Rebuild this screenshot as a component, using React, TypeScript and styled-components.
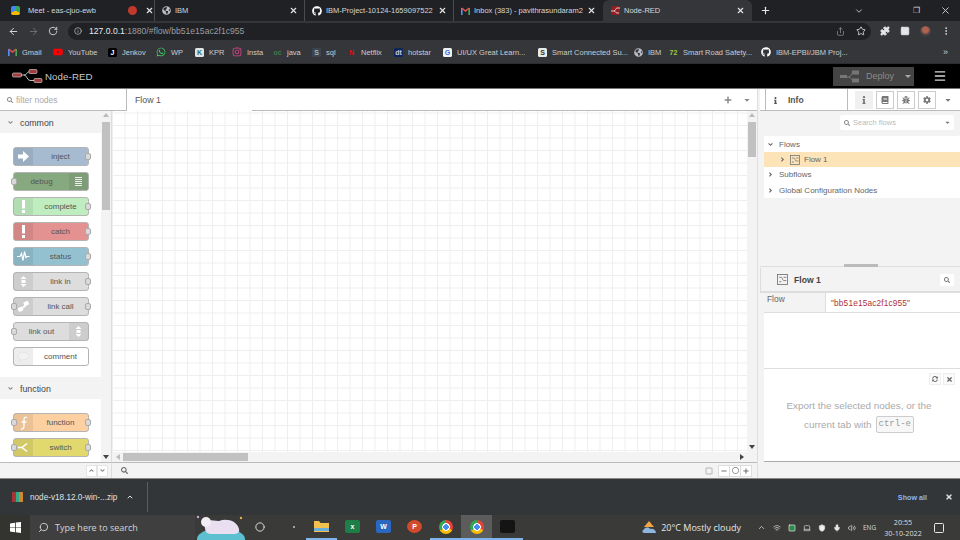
import React from "react";
import styled, { createGlobalStyle } from "styled-components";
import {
  ArrowLeft, ArrowRight, RotateCw, Info, Share, Star, Puzzle, MoreVertical, Plus, X, Search,
  ChevronDown, ChevronUp, Menu, Circle, Square, Wifi, Laptop, Shield, Mic, Volume2,
} from "lucide-react";
import {
  FaGithub, FaWhatsapp, FaInstagram, FaGlobeAmericas, FaYoutube, FaInfo, FaBook, FaBug, FaCog, FaSearch,
  FaCaretDown, FaPlus, FaMinus, FaTimes, FaSyncAlt, FaAngleDown, FaAngleRight, FaAngleUp, FaRegCircle,
} from "react-icons/fa";

const Global = createGlobalStyle`
  html, body { margin: 0; padding: 0; background: #202124; }
  body { width: 960px; height: 540px; overflow: hidden; font-family: "Liberation Sans", Arial, sans-serif; }
  * { box-sizing: border-box; }
`;

const Page = styled.div`
  width: 960px; height: 540px; display: flex; flex-direction: column; overflow: hidden;
`;

/* Browser chrome */
const TabStrip = styled.div`
  height: 21px; background: #202124; display: flex; align-items: stretch; color: #e4e6e9; flex: none;
`;
const Tab = styled.div<{ $w: number; $active?: boolean; $pad?: number; $sep?: boolean; $gap?: number }>`
  width: ${(p) => p.$w}px; flex: none; display: flex; align-items: center; padding: 0 6px 0 ${(p) => p.$pad ?? 8}px; gap: ${(p) => p.$gap ?? 4}px;
  font-size: 7.5px; background: ${(p) => (p.$active ? "#35363a" : "transparent")};
  border-radius: ${(p) => (p.$active ? "6px 6px 0 0" : "0")};
  border-right: 1px solid ${(p) => (p.$sep ? "#4a4b4e" : "transparent")};
  white-space: nowrap; overflow: hidden;
`;
const TabTitle = styled.span`
  flex: 1; overflow: hidden; color: #d5d7da;
`;
const TabClose = styled(X).attrs({ size: 9, strokeWidth: 3 })`
  flex: none; color: #e6e6e6;
`;
const Favicon = styled.span<{ $bg: string; $round?: boolean }>`
  width: 9px; height: 9px; border-radius: ${(p) => (p.$round ? "50%" : "2px")}; background: ${(p) => p.$bg}; flex: none; display: inline-flex; align-items: center; justify-content: center;
`;
const StripSpacer = styled.div`
  flex: 1;
`;
const NewTab = styled.div`
  width: 26px; display: flex; align-items: center; justify-content: center; color: #e8e8e8;
`;
const WinBtn = styled.div<{ $w: number; $mr?: number }>`
  width: ${(p) => p.$w}px; margin-right: ${(p) => p.$mr ?? 0}px; display: flex; align-items: center; justify-content: center; color: #d5d5d5; font-size: 8px;
`;
const Toolbar = styled.div`
  height: 20px; background: #35363a; display: flex; align-items: center; flex: none; color: #dfe1e5; padding-left: 3px;
`;
const NavBtn = styled.div<{ $dim?: boolean }>`
  width: 20px; display: flex; justify-content: center; color: ${(p) => (p.$dim ? "#6f7276" : "#dfe1e5")};
`;
const UrlPill = styled.div`
  width: 803px; margin-left: 5px; height: 17px; background: #202124; border-radius: 9px; display: flex; align-items: center;
  padding: 0 5px 0 6px; font-size: 8.6px; gap: 7px; flex: none;
`;
const UrlHost = styled.span`
  color: #e8eaed;
`;
const UrlPath = styled.span`
  color: #9a9da1; flex: 1;
`;
const PillIcons = styled.div`
  display: flex; align-items: center; gap: 11px; color: #dfe1e5;
`;
const ToolIcons = styled.div`
  display: flex; align-items: center; gap: 10px; margin-left: 9px; color: #e4e6e9;
`;
const Avatar = styled.span`
  width: 11px; height: 11px; border-radius: 50%; background: radial-gradient(circle at 50% 35%, #b0624e 0 30%, #3b3d42 60%); display: block;
`;
const BookmarkBar = styled.div`
  height: 23px; background: #35363a; display: flex; align-items: center; flex: none; padding-left: 8px; color: #c9ccd0; font-size: 7.5px; border-bottom: 1px solid #2b2c30;
`;
const Bookmark = styled.div<{ $w: number }>`
  width: ${(p) => p.$w}px; display: flex; align-items: center; gap: 5px; flex: none; white-space: nowrap; overflow: hidden;
`;
const Glyph = styled.span<{ $bg: string; $fg?: string }>`
  width: 9px; height: 9px; border-radius: 1.5px; background: ${(p) => p.$bg}; color: ${(p) => p.$fg ?? "#fff"}; font-size: 7px; font-weight: 700;
  display: inline-flex; align-items: center; justify-content: center; flex: none; line-height: 1;
`;
const MoreMarks = styled.span`
  margin-left: auto; margin-right: 12px; color: #c9ccd0; font-size: 9px;
`;

/* Node-RED header */
const NrHeader = styled.div`
  height: 25px; background: #000; display: flex; align-items: center; flex: none; border-bottom: 1px solid #777; padding-left: 12px;
`;
const NrTitle = styled.span`
  color: #c8c8c8; font-size: 9.7px; margin-left: 2px; letter-spacing: .1px;
`;
const DeployBtn = styled.div`
  margin-left: auto; width: 81px; height: 19px; background: #444; color: #8a8a8a; font-size: 9px; display: flex; align-items: center; gap: 7px; padding-left: 7px;
`;
const DeployCaret = styled.span`
  width: 0; height: 0; border: 3px solid transparent; border-top: 3.5px solid #aaa; border-bottom: 0; margin-left: 4px;
`;
const Burger = styled.div`
  width: 41px; display: flex; justify-content: center; color: #d8d8d8; margin-left: 5px;
`;

/* Node-RED body */
const Body = styled.div`
  height: 390px; flex: none; display: flex; background: #f3f3f3; color: #555; border-bottom: 1px solid #888;
`;
const Palette = styled.div`
  width: 112px; flex: none; display: flex; flex-direction: column; position: relative;
`;
const FilterBox = styled.div`
  width: 127px; height: 22px; background: #fff; border-right: 1px solid #bbb; border-bottom: 1px solid #bbb; position: relative; z-index: 2;
  display: flex; align-items: center; gap: 3px; padding-left: 7px; font-size: 8.5px; color: #aaa; flex: none;
`;
const PaletteMain = styled.div`
  flex: 1; display: flex; min-height: 0; border-right: 1px solid #ddd;
`;
const PaletteList = styled.div`
  width: 101px; flex: none; overflow: hidden; display: flex; flex-direction: column;
`;
const CatHead = styled.div`
  height: 22px; flex: none; display: flex; align-items: center; gap: 6px; padding: 1px 0 0 7px; color: #444; font-size: 8.8px; background: #f3f3f3;
`;
const CatBody = styled.div<{ $h: number }>`
  height: ${(p) => p.$h}px; flex: none; background: #fff; padding: 14px 0 0 13px; display: flex; flex-direction: column; gap: 6px;
`;
const PNode = styled.div<{ $bg: string; $right?: boolean }>`
  width: 76px; height: 19px; flex: none; background: ${(p) => p.$bg}; border: 1px solid #b4b4b4; border-radius: 3px; position: relative;
  display: flex; flex-direction: ${(p) => (p.$right ? "row-reverse" : "row")}; align-items: stretch; font-size: 8px; color: #555;
`;
const NodeIcon = styled.span`
  width: 19px; flex: none; background: rgba(0, 0, 0, .07); display: flex; align-items: center; justify-content: center; color: #fff;
`;
const NodeLabel = styled.span`
  flex: 1; text-align: center; line-height: 17px; white-space: nowrap;
`;
const Port = styled.span<{ $side: "l" | "r" }>`
  position: absolute; top: 5px; ${(p) => (p.$side === "l" ? "left: -3px" : "right: -3px")}; width: 6px; height: 7px; background: #d9d9d9; border: 1px solid #aaa; border-radius: 2px;
`;
const VTrack = styled.div`
  width: 10px; flex: none; position: relative; background: #f3f3f3;
`;
const ScrollArrowUp = styled.span`
  position: absolute; top: 2px; left: 2px; width: 0; height: 0; border: 3px solid transparent; border-bottom: 4px solid #bbb; border-top: 0;
`;
const ScrollArrowDown = styled.span`
  position: absolute; bottom: 3px; left: 2px; width: 0; height: 0; border: 3px solid transparent; border-top: 4px solid #444; border-bottom: 0;
`;
const VThumb = styled.span<{ $t: number; $h: number }>`
  position: absolute; top: ${(p) => p.$t}px; left: 1px; width: 8px; height: ${(p) => p.$h}px; background: #c1c1c1;
`;
const PalFoot = styled.div`
  height: 16px; flex: none; background: #f3f3f3; border-top: 1px solid #bbb; border-right: 1px solid #ddd; display: flex; align-items: center; padding-left: 86px; color: #888;
`;
const PalBtn = styled.span`
  width: 11px; height: 12px; background: #fff; border: 1px solid #e4e4e4; display: flex; align-items: center; justify-content: center;
`;

const Workspace = styled.div`
  flex: 1; display: flex; flex-direction: column; min-width: 0;
`;
const WsTabs = styled.div`
  height: 22px; flex: none; background: #fff; border-bottom: 1px solid #bbb; display: flex; align-items: center; color: #777; position: relative;
`;
const FlowTab = styled.div`
  position: absolute; left: 15px; top: 0; width: 125px; height: 22px; background: #fff; padding-left: 8px; line-height: 23px; font-size: 8.8px; color: #555; z-index: 3;
`;
const WsTools = styled.div`
  margin-left: auto; display: flex; align-items: center; gap: 11px; padding-right: 6px; color: #888;
`;
const CanvasRow = styled.div`
  flex: 1; display: flex; min-height: 0;
`;
const Canvas = styled.div`
  flex: 1; background-color: #fff;
  background-image: linear-gradient(#eee 1px, transparent 1px), linear-gradient(90deg, #eee 1px, transparent 1px);
  background-size: 12.5px 12.5px; background-position: 0 1.5px;
`;
const HBar = styled.div`
  height: 10px; flex: none; background: #f3f3f3; position: relative;
`;
const HThumb = styled.span`
  position: absolute; left: 11px; top: 1px; width: 125px; height: 8px; background: #c1c1c1;
`;
const HLeft = styled.span`
  position: absolute; left: 4px; top: 2px; width: 0; height: 0; border: 3px solid transparent; border-right: 4px solid #bbb; border-left: 0;
`;
const HRight = styled.span`
  position: absolute; right: 13px; top: 2px; width: 0; height: 0; border: 3px solid transparent; border-left: 4px solid #444; border-right: 0;
`;
const WsFoot = styled.div`
  height: 16px; flex: none; background: #f3f3f3; border-top: 1px solid #bbb; display: flex; align-items: center; color: #888; padding-left: 9px;
`;
const FootSearch = styled.span`
  display: flex; color: #666;
`;
const ZoomGroup = styled.div`
  margin-left: auto; display: flex; align-items: center; margin-right: 5px;
`;
const ZoomBtn = styled.span`
  width: 12px; height: 12px; background: #fff; border: 1px solid #ddd; margin-left: -1px; display: flex; align-items: center; justify-content: center; color: #777;
`;
const FitBtn = styled.span`
  width: 11px; height: 12px; margin-right: 5px; display: flex; align-items: center; justify-content: center; color: #999;
`;

const Divider = styled.div`
  width: 3px; flex: none; background: #f3f3f3; border-left: 1px solid #ddd;
`;
const Sidebar = styled.div`
  width: 200px; flex: none; display: flex; flex-direction: column; background: #f3f3f3;
`;
const SideTabs = styled.div`
  height: 22px; flex: none; background: #fff; border-bottom: 1px solid #bbb; display: flex; align-items: center; gap: 3px; padding-right: 8px; color: #777;
`;
const InfoTab = styled.div`
  width: 83px; height: 22px; margin-left: 5px; border-left: 1px solid #bbb; border-right: 1px solid #bbb; display: flex; align-items: center; gap: 9px; padding: 1px 0 0 6px; font-size: 8.5px; font-weight: 700; color: #555; margin-right: 4px;
`;
const SideBtn = styled.span<{ $on?: boolean }>`
  width: 18px; height: 18px; display: flex; align-items: center; justify-content: center; border: 1px solid ${(p) => (p.$on ? "#f0f0f0" : "#ccc")};
  background: ${(p) => (p.$on ? "#f0f0f0" : "#fff")}; color: #777;
`;
const SideCaret = styled.span`
  margin-left: auto; display: flex; color: #777;
`;
const SearchRow = styled.div`
  height: 24px; flex: none; padding: 4px 6px 0 80px;
`;
const SearchFlows = styled.div`
  height: 15px; background: #fff; border-radius: 2px; display: flex; align-items: center; gap: 3px; padding: 0 3px 0 4px; font-size: 7.5px; color: #bbb;
`;
const Tree = styled.div`
  margin-left: 4px; height: 62px; background: #fff; flex: none; padding-top: 1px; margin-top: 1px;
`;
const TreeRow = styled.div<{ $sel?: boolean; $indent?: number }>`
  height: 15.2px; display: flex; align-items: center; gap: ${(p) => (p.$sel ? 4 : 5)}px; padding-left: ${(p) => p.$indent ?? 3}px; font-size: 8px; color: #666;
  background: ${(p) => (p.$sel ? "#fde3b8" : "transparent")};
`;
const TreeGap = styled.div`
  height: 69px; flex: none; border-bottom: 1px solid #ddd; position: relative;
`;
const SashHandle = styled.span`
  position: absolute; left: 84px; bottom: -1px; width: 34px; height: 3px; background: #bbb;
`;
const DetailHead = styled.div`
  height: 25px; margin-top: 1px; flex: none; display: flex; align-items: center; gap: 6px; padding-left: 16px; font-size: 8.6px; font-weight: 700; color: #444; border-bottom: 2px solid #ddd; border-left: 1px solid #ddd;
`;
const DetailSearch = styled.span`
  margin-left: auto; margin-right: 6px; width: 14px; height: 12px; background: #fff; display: flex; align-items: center; justify-content: center; color: #777;
`;
const PropRow = styled.div`
  height: 20px; flex: none; display: flex; background: #fff; border-bottom: 1px solid #ddd; margin-left: 4px; font-size: 8px;
`;
const PropKey = styled.div`
  width: 62px; background: #f3f3f3; padding: 1px 0 0 3px; color: #666; border-right: 1px solid #ddd; font-size: 8.4px;
`;
const PropVal = styled.div`
  padding: 5px 0 0 5px; color: #a33; letter-spacing: .15px; font-size: 8.3px;
`;
const PropEmpty = styled.div`
  height: 56px; flex: none; margin-left: 4px; background: #fff; border-bottom: 1px solid #ddd;
`;
const Help = styled.div`
  height: 93px; flex: none; margin-left: 4px; background: #fff; border-bottom: 1px solid #aaa; position: relative; padding: 27px 28px 0 22px; color: #aaa; font-size: 9.9px;
`;
const HelpLine = styled.div`
  height: 19px; display: flex; align-items: center; justify-content: center; gap: 4px; white-space: nowrap;
`;
const HelpTools = styled.div`
  position: absolute; top: 4px; right: 5px; display: flex; gap: 2px; color: #666;
`;
const HelpBtn = styled.span`
  width: 12px; height: 12px; border: 1px solid #eee; display: flex; align-items: center; justify-content: center; background: #fafafa;
`;
const Kbd = styled.code`
  line-height: 13px; font-family: "Liberation Mono", monospace; font-size: 9px; background: #f7f7f7; border: 1px solid #ccc; border-radius: 2px; padding: 1px 2px; color: #999;
`;

/* Downloads + Taskbar */
const DownloadBar = styled.div`
  height: 36px; flex: none; background: #333639; display: flex; align-items: center; color: #dfe1e5; font-size: 8.2px;
`;
const DlItem = styled.div`
  width: 148px; height: 30px; display: flex; align-items: center; gap: 7px; padding-left: 12px; border-right: 1px solid #5a5c60;
`;
const DlIcon = styled.span`
  width: 11px; height: 10px; flex: none; background: linear-gradient(90deg, #a33 0 33%, #3a8 33% 66%, #c83 66%); display: block;
`;
const DlName = styled.span`
  width: 89px; white-space: nowrap; overflow: hidden;
`;
const ShowAll = styled.span`
  margin-left: auto; margin-right: 5px; color: #8ab4f8; font-size: 7.2px; font-weight: 700;
`;
const DlClose = styled.span`
  width: 28px; display: flex; justify-content: center; color: #e0e0e0; padding-left: 5px;
`;
const Taskbar = styled.div`
  flex: 1; background: #3a3a38; display: flex; align-items: center; color: #e6e6e6; min-height: 0;
`;
const StartBtn = styled.div`
  width: 30px; height: 100%; display: flex; align-items: center; justify-content: center; background: #333330;
`;
const SearchBox = styled.div`
  width: 165px; height: 100%; background: #3f3f3f; display: flex; align-items: center; gap: 6px; padding-left: 8px; font-size: 9px; color: #d4d4d4; font-family: "Open Sans", sans-serif;
`;
const MirroredSearch = styled(Search)`
  transform: scaleX(-1);
`;
const Widget = styled.div`
  width: 50px; height: 100%; flex: none; display: flex;
`;
const TaskIcon = styled.div<{ $active?: boolean; $run?: boolean; $w?: number; $pl?: number }>`
  width: ${(p) => p.$w ?? 31}px; height: 100%; flex: none; display: flex; align-items: center; justify-content: center;
  padding-left: ${(p) => p.$pl ?? 0}px;
  background: ${(p) => (p.$active ? "#5c5c5c" : "transparent")};
  border-bottom: 2px solid ${(p) => (p.$run ? "#7fb4e8" : "transparent")};
`;
const AppBox = styled.span<{ $bg: string; $round?: boolean }>`
  width: 15px; height: 13px; background: ${(p) => p.$bg}; border-radius: ${(p) => (p.$round ? "50%" : "2px")}; color: #fff; font-size: 7px; font-weight: 700;
  display: flex; align-items: center; justify-content: center;
`;
const ChromeBall = styled.span`
  width: 14px; height: 14px; border-radius: 50%; display: block;
  background: radial-gradient(circle, #4a8df0 0 28%, #fff 29% 38%, transparent 39%), conic-gradient(#e84335 0 33%, #fbbc05 33% 66%, #34a853 66%);
`;
const Tray = styled.div`
  margin-left: auto; display: flex; align-items: center; height: 100%; font-family: "Open Sans", sans-serif;
`;
const Weather = styled.div`
  display: flex; align-items: center; gap: 4px; font-size: 9px; margin-right: 16px; color: #e6e6e6;
`;
const TrayIcons = styled.div`
  display: flex; align-items: center; gap: 7px; color: #ddd; margin-right: 7px;
`;
const TrayLang = styled.span`
  font-size: 6.5px; width: 13px;
`;
const Clock = styled.div`
  font-size: 7.2px; text-align: center; line-height: 11px; width: 40px; color: #ddd; white-space: nowrap;
`;
const Notify = styled.div`
  width: 32px; margin-right: 5px; display: flex; justify-content: center; color: #e6e6e6;
`;

const Logo = () => (
  <svg width="31" height="14" viewBox="0 0 31 14">
    <path d="M8 6h4c3 0 3-3.500 6-3.500h2M12 6c3 0 3 5.500 6 5.500h4" stroke="#bbb" strokeWidth="1" fill="none" />
    <rect x="0.500" y="4" width="9" height="4" rx="1" fill="#a33c3c" stroke="#ddd" strokeWidth=".6" />
    <rect x="17" y="0.500" width="8" height="4" rx="1" fill="#a33c3c" stroke="#ddd" strokeWidth=".6" />
    <rect x="22" y="9.500" width="8" height="4" rx="1" fill="#a33c3c" stroke="#ddd" strokeWidth=".6" />
  </svg>
);
const SmallLogo = () => (
  <svg width="9" height="9" viewBox="0 0 9 9" stroke="#f3d0d0" strokeWidth=".9" fill="none">
    <path d="M0 5h3c1.500 0 1.500-3 3-3h3M3 5c1.500 0 1.500 2 3 2h2" />
  </svg>
);
const GmailIcon = () => (
  <svg width="9" height="8" viewBox="0 0 9 8" fill="none" strokeWidth="1.600">
    <path d="M.8 8V1" stroke="#5b8def" />
    <path d="M8.200 8V1" stroke="#45a85a" />
    <path d="M.8 1l3.700 3L8.200 1" stroke="#e0534a" />
  </svg>
);
const DeployIcon = () => (
  <svg width="19" height="13" viewBox="0 0 19 13">
    <path d="M6 7h3c2 0 2-4 4-4M9 7c2 0 2 3 4 3" stroke="#777" fill="none" />
    <rect x="0" y="5" width="7" height="3" fill="#777" />
    <rect x="12" y="0.500" width="7" height="4" fill="#777" />
    <rect x="12" y="8.500" width="7" height="4" fill="#777" />
  </svg>
);
const FlowIcon = ({ size = 10 }: { size?: number }) => (
  <svg width={size} height={size} viewBox="0 0 10 10" fill="none" stroke="#777" strokeWidth=".8">
    <rect x=".5" y=".5" width="9" height="9" />
    <path d="M2 3h2M6 3h2.500M2 7h2M6 6h2.500M4 3c1 0 1 3 2 3" />
  </svg>
);
const Bear = () => (
  <svg width="50" height="25" viewBox="0 0 50 25">
    <ellipse cx="26" cy="24" rx="24" ry="11" fill="#5cc0d0" />
    <path d="M8 6c6-2 10 0 16 0 8-3 18 0 20 8 1 4-2 5-6 5H16c-4 0-6-3-6-6z" fill="#e9dff0" />
    <circle cx="11" cy="7" r="5" fill="#f2ecf5" />
    <circle cx="3" cy="2" r="1.200" fill="#c9a5e0" />
    <circle cx="46" cy="3" r="1.200" fill="#e5b04a" />
  </svg>
);
const InjectArrow = () => (
  <svg width="11" height="11" viewBox="0 0 11 11" fill="#fff">
    <path d="M0 3.500h5V0l6 5.500L5 11V7.500H0z" />
  </svg>
);
const WrenchLines = () => (
  <svg width="9" height="11" viewBox="0 0 9 11" stroke="#eee" strokeWidth="1">
    <path d="M1 1.500h7M1 3.500h7M1 5.500h7M1 7.500h7M1 9.500h7" />
  </svg>
);
const Pulse = () => (
  <svg width="13" height="11" viewBox="0 0 13 11" stroke="#fff" strokeWidth="1.200" fill="none">
    <path d="M0 5.500h3l1.500-3 1.500 7 1.500-9 1.500 6 1-1h2.500" />
  </svg>
);
const LinkArrows = () => (
  <svg width="7" height="11" viewBox="0 0 7 11" fill="#fff">
    <path d="M3.500 0l3 3h-6zM3.500 11l3-3h-6zM1.500 4h4v3h-4z" />
  </svg>
);
const LinkCallIcon = () => (
  <svg width="13" height="12" viewBox="0 0 13 12" fill="#fff">
    <rect x="6.500" y="0.500" width="5" height="4" rx="1" transform="rotate(-25 9 2)" />
    <rect x="1" y="6.500" width="5" height="4" rx="1" transform="rotate(-25 3 8)" />
    <path d="M5 6l3-2 1 1.500-3 2z" />
  </svg>
);
const Bubble = () => (
  <svg width="13" height="10" viewBox="0 0 13 10" fill="#f2f2f2" stroke="#ddd" strokeWidth=".6">
    <path d="M1 4c0-2 2.500-3.500 5.500-3.500S12 2 12 4s-2.500 3.500-5.500 3.500L3 9l.6-2.200C2 6 1 5 1 4z" />
  </svg>
);
const SwitchIcon = () => (
  <svg width="12" height="11" viewBox="0 0 12 11" stroke="#fff" strokeWidth="1.600" fill="none">
    <path d="M0 5.500h4M4 5.500L9 1.500M4 5.500L9 9.500" />
  </svg>
);
const FnIcon = () => (
  <svg width="8" height="14" viewBox="0 0 8 14" stroke="#fff" strokeWidth="1.300" fill="none">
    <path d="M7 1.500C4.500 0.500 4 2 4 4v6c0 2-1 3.500-3 3M1.500 6h5" />
  </svg>
);
const BangIcon = () => (
  <svg width="3" height="13" viewBox="0 0 3 13" fill="#fff">
    <rect width="3" height="8.500" />
    <rect y="10" width="3" height="3" />
  </svg>
);
const StartLogo = () => (
  <svg width="11" height="11" viewBox="0 0 11 11" fill="#fff">
    <path d="M0 1.500L5 .7v4.500H0zM5.800.6L11 0v5.200H5.800zM0 5.800h5v4.500l-5-.8zM5.800 5.800H11V11l-5.200-.7z" />
  </svg>
);
const FolderIcon = () => (
  <svg width="15" height="13" viewBox="0 0 15 13">
    <path d="M0 1h5l1.500 2H15v9H0z" fill="#f2c14e" />
    <rect y="8" width="15" height="3" fill="#6ab0dc" />
  </svg>
);
const CloudSun = () => (
  <svg width="15" height="13" viewBox="0 0 15 13">
    <path d="M7 0l5 6H2z" fill="#f3a642" />
    <path d="M2 12c-2 0-2-3 0-3.500C3 6 7 6 8 8c3-1 6 1 6 4z" fill="#8fb6df" />
  </svg>
);

type N = { l: string; bg: string; icon: React.ReactNode; right?: boolean; inP?: boolean; outP?: boolean };
const common: N[] = [
  { l: "inject", bg: "#a6bbcf", icon: <InjectArrow />, outP: true },
  { l: "debug", bg: "#87a980", icon: <WrenchLines />, right: true, inP: true },
  { l: "complete", bg: "#c0edc0", icon: <BangIcon />, outP: true },
  { l: "catch", bg: "#e49191", icon: <BangIcon />, outP: true },
  { l: "status", bg: "#94c1d0", icon: <Pulse />, outP: true },
  { l: "link in", bg: "#dddddd", icon: <LinkArrows />, outP: true },
  { l: "link call", bg: "#dddddd", icon: <LinkCallIcon />, inP: true, outP: true },
  { l: "link out", bg: "#dddddd", icon: <LinkArrows />, right: true, inP: true },
  { l: "comment", bg: "#ffffff", icon: <Bubble /> },
];
const fn: N[] = [
  { l: "function", bg: "#fdd0a2", icon: <FnIcon />, inP: true, outP: true },
  { l: "switch", bg: "#e2d96e", icon: <SwitchIcon />, inP: true, outP: true },
];
const PaletteNode = ({ n }: { n: N }) => (
  <PNode $bg={n.bg} $right={n.right}>
    <NodeIcon>{n.icon}</NodeIcon>
    <NodeLabel>{n.l}</NodeLabel>
    {n.inP && <Port $side="l" />}
    {n.outP && <Port $side="r" />}
  </PNode>
);

const tabs = [
  { w: 120, t: "Meet - eas-cjuo-ewb", pad: 11, gap: 8, sep: false, icon: <Favicon $bg="conic-gradient(#34a853 0 33%, #fbbc05 33% 66%, #4285f4 66%)" />, close: false },
  { w: 35, t: "", pad: 8, gap: 4, sep: true, icon: <Favicon $round $bg="#c0392b" />, close: true },
  { w: 150, t: "IBM", pad: 7, gap: 4, sep: true, icon: <FaGlobeAmericas size={9} color="#b8bcc2" />, close: true },
  { w: 149, t: "IBM-Project-10124-1659097522", pad: 7, gap: 4, sep: true, icon: <FaGithub size={10} color="#fff" />, close: true },
  { w: 149, t: "Inbox (383) - pavithrasundaram2", pad: 7, gap: 4, sep: false, icon: <GmailIcon />, close: true },
];

const marks: { w: number; t: string; i: React.ReactNode }[] = [
  { w: 45, t: "Gmail", i: <GmailIcon /> },
  { w: 55, t: "YouTube", i: <FaYoutube size={10} color="#f00" /> },
  { w: 48, t: "Jenkov", i: <Glyph $bg="#000">J</Glyph> },
  { w: 39, t: "WP", i: <FaWhatsapp size={10} color="#3fcf60" /> },
  { w: 37, t: "KPR", i: <Glyph $bg="#dde5e6" $fg="#26707a">K</Glyph> },
  { w: 41, t: "Insta", i: <FaInstagram size={10} color="#e0458c" /> },
  { w: 39, t: "java", i: <Glyph $bg="transparent" $fg="#3c7a4a">oc</Glyph> },
  { w: 35, t: "sql", i: <Glyph $bg="#3e4451" $fg="#9bb">S</Glyph> },
  { w: 47, t: "Netflix", i: <Glyph $bg="transparent" $fg="#e50914">N</Glyph> },
  { w: 49, t: "hotstar", i: <Glyph $bg="#10245c" $fg="#ccd">dt</Glyph> },
  { w: 95, t: "UI/UX  Great Learn...", i: <Glyph $bg="#eef1f6" $fg="#3b6bd6">G</Glyph> },
  { w: 96, t: "Smart Connected Su...", i: <Glyph $bg="#e8ece8" $fg="#333">S</Glyph> },
  { w: 35, t: "IBM", i: <FaGlobeAmericas size={9} color="#b8bcc2" /> },
  { w: 92, t: "Smart Road Safety...", i: <Glyph $bg="transparent" $fg="#9ccc3c">72</Glyph> },
  { w: 90, t: "IBM-EPBI/JBM Proj...", i: <FaGithub size={10} color="#fff" /> },
];

export default function App() {
  return (
    <Page>
      <Global />
      <TabStrip>
        {tabs.map((t) => (
          <Tab key={t.w + t.t} $w={t.w} $pad={t.pad} $gap={t.gap} $sep={t.sep}>
            {t.icon}
            <TabTitle>{t.t}</TabTitle>
            {t.close && <TabClose />}
          </Tab>
        ))}
        <Tab $w={149} $active>
          <Favicon $bg="#8f1f24"><SmallLogo /></Favicon>
          <TabTitle>Node-RED</TabTitle>
          <TabClose />
        </Tab>
        <NewTab><Plus size={11} strokeWidth={2.500} /></NewTab>
        <StripSpacer />
        <WinBtn $w={30} $mr={28}><ChevronDown size={10} /></WinBtn>
        <WinBtn $w={28}>❐</WinBtn>
        <WinBtn $w={30}><X size={11} /></WinBtn>
      </TabStrip>
      <Toolbar>
        <NavBtn><ArrowLeft size={11} /></NavBtn>
        <NavBtn $dim><ArrowRight size={11} /></NavBtn>
        <NavBtn><RotateCw size={10} /></NavBtn>
        <UrlPill>
          <Info size={8} color="#c4c7ca" />
          <UrlPath><UrlHost>127.0.0.1</UrlHost>:1880/#flow/bb51e15ac2f1c955</UrlPath>
          <PillIcons>
            <Share size={9} color="#8d9094" />
            <Star size={10} />
          </PillIcons>
        </UrlPill>
        <ToolIcons>
          <Puzzle size={10} fill="#e4e6e9" />
          <Square size={10} fill="#e4e6e9" />
          <Avatar />
          <MoreVertical size={10} />
        </ToolIcons>
      </Toolbar>
      <BookmarkBar>
        {marks.map((m) => (
          <Bookmark key={m.t} $w={m.w}>{m.i}<span>{m.t}</span></Bookmark>
        ))}
        <MoreMarks>»</MoreMarks>
      </BookmarkBar>
      <NrHeader>
        <Logo />
        <NrTitle>Node-RED</NrTitle>
        <DeployBtn><DeployIcon />Deploy<DeployCaret /></DeployBtn>
        <Burger><Menu size={14} strokeWidth={2.200} /></Burger>
      </NrHeader>
      <Body>
        <Palette>
          <FilterBox><FaSearch size={6} color="#888" />filter nodes</FilterBox>
          <PaletteMain>
            <PaletteList>
              <CatHead><FaAngleDown size={7} color="#888" />common</CatHead>
              <CatBody $h={244}>
                {common.map((n) => <PaletteNode key={n.l} n={n} />)}
              </CatBody>
              <CatHead><FaAngleDown size={7} color="#888" />function</CatHead>
              <CatBody $h={80}>
                {fn.map((n) => <PaletteNode key={n.l} n={n} />)}
              </CatBody>
            </PaletteList>
            <VTrack>
              <ScrollArrowUp />
              <VThumb $t={11} $h={88} />
              <ScrollArrowDown />
            </VTrack>
          </PaletteMain>
          <PalFoot>
            <PalBtn><FaAngleUp size={7} /></PalBtn>
            <PalBtn><FaAngleDown size={7} /></PalBtn>
          </PalFoot>
        </Palette>
        <Workspace>
          <WsTabs>
            <FlowTab>Flow 1</FlowTab>
            <WsTools>
              <FaPlus size={8} />
              <FaCaretDown size={8} />
            </WsTools>
          </WsTabs>
          <CanvasRow>
            <Canvas />
            <VTrack>
              <ScrollArrowUp />
              <VThumb $t={11} $h={35} />
              <ScrollArrowDown />
            </VTrack>
          </CanvasRow>
          <HBar><HLeft /><HThumb /><HRight /></HBar>
          <WsFoot>
            <FootSearch><FaSearch size={7} /></FootSearch>
            <ZoomGroup>
              <FitBtn><Square size={8} strokeDasharray="2 2" /></FitBtn>
              <ZoomBtn><FaMinus size={6} /></ZoomBtn>
              <ZoomBtn><FaRegCircle size={7} /></ZoomBtn>
              <ZoomBtn><FaPlus size={6} /></ZoomBtn>
            </ZoomGroup>
          </WsFoot>
        </Workspace>
        <Divider />
        <Sidebar>
          <SideTabs>
            <InfoTab><FaInfo size={7} />Info</InfoTab>
            <SideBtn $on><FaInfo size={8} /></SideBtn>
            <SideBtn><FaBook size={8} /></SideBtn>
            <SideBtn><FaBug size={8} /></SideBtn>
            <SideBtn><FaCog size={8} /></SideBtn>
            <SideCaret><FaCaretDown size={8} /></SideCaret>
          </SideTabs>
          <SearchRow>
            <SearchFlows><FaSearch size={6} color="#888" />Search flows<SideCaret><FaCaretDown size={7} /></SideCaret></SearchFlows>
          </SearchRow>
          <Tree>
            <TreeRow><FaAngleDown size={7} />Flows</TreeRow>
            <TreeRow $sel $indent={15}><FaAngleRight size={7} /><FlowIcon />Flow 1</TreeRow>
            <TreeRow><FaAngleRight size={7} />Subflows</TreeRow>
            <TreeRow><FaAngleRight size={7} />Global Configuration Nodes</TreeRow>
          </Tree>
          <TreeGap><SashHandle /></TreeGap>
          <DetailHead><FlowIcon size={11} />Flow 1<DetailSearch><FaSearch size={6} /></DetailSearch></DetailHead>
          <PropRow>
            <PropKey>Flow</PropKey>
            <PropVal>"bb51e15ac2f1c955"</PropVal>
          </PropRow>
          <PropEmpty />
          <Help>
            <HelpTools>
              <HelpBtn><FaSyncAlt size={6} /></HelpBtn>
              <HelpBtn><FaTimes size={7} /></HelpBtn>
            </HelpTools>
            <HelpLine>Export the selected nodes, or the</HelpLine>
            <HelpLine><span>current tab with</span><Kbd>ctrl-e</Kbd></HelpLine>
          </Help>
        </Sidebar>
      </Body>
      <DownloadBar>
        <DlItem>
          <DlIcon />
          <DlName>node-v18.12.0-win-...zip</DlName>
          <ChevronUp size={8} strokeWidth={3} />
        </DlItem>
        <ShowAll>Show all</ShowAll>
        <DlClose><FaTimes size={8} /></DlClose>
      </DownloadBar>
      <Taskbar>
        <StartBtn><StartLogo /></StartBtn>
        <SearchBox><MirroredSearch size={11} />Type here to search</SearchBox>
        <Widget><Bear /></Widget>
        <TaskIcon $w={30}><Circle size={10} strokeWidth={2.200} /></TaskIcon>
        <TaskIcon $pl={7}><Circle size={2} fill="#fff" /></TaskIcon>
        <TaskIcon $run><FolderIcon /></TaskIcon>
        <TaskIcon><AppBox $bg="#1e7e45">x</AppBox></TaskIcon>
        <TaskIcon><AppBox $bg="#2b66c0">W</AppBox></TaskIcon>
        <TaskIcon><AppBox $bg="#d24a2c" $round>P</AppBox></TaskIcon>
        <TaskIcon $run><ChromeBall /></TaskIcon>
        <TaskIcon $active $run><ChromeBall /></TaskIcon>
        <TaskIcon $run><AppBox $bg="#141414"></AppBox></TaskIcon>
        <Tray>
          <Weather><CloudSun />20°C Mostly cloudy</Weather>
          <TrayIcons>
            <ChevronUp size={9} />
            <Wifi size={8} />
            <Square size={8} fill="#2a8a4a" color="#eee" />
            <Laptop size={8} />
            <Shield size={8} fill="#eee" />
            <Mic size={8} fill="#eee" />
            <Volume2 size={8} />
            <TrayLang>ENG</TrayLang>
          </TrayIcons>
          <Clock>20:55<br />30-10-2022</Clock>
          <Notify><Square size={12} /></Notify>
        </Tray>
      </Taskbar>
    </Page>
  );
}
